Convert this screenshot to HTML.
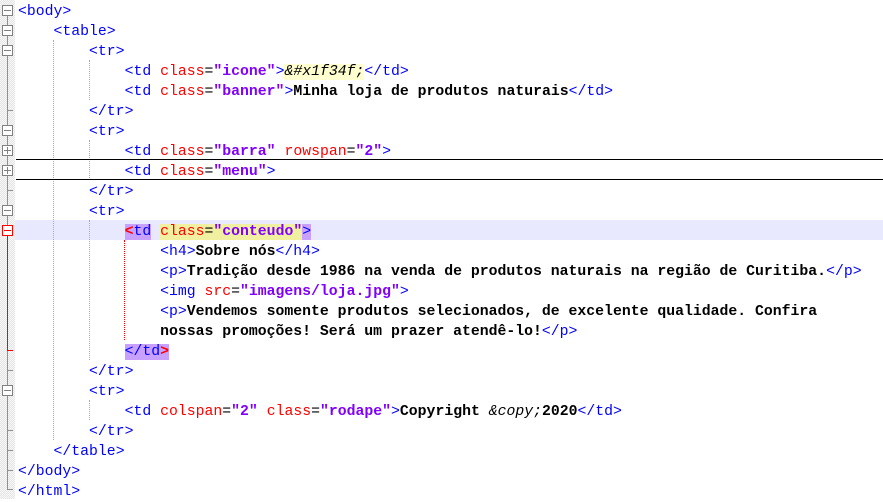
<!DOCTYPE html>
<html><head><meta charset="utf-8"><style>
body{margin:0;width:883px;height:499px;overflow:hidden;background:#fff;position:relative;font-family:"Liberation Mono",monospace;font-size:14.8px}
.m{position:absolute;left:0;top:0;width:15px;height:499px;background-color:#f0f0f0;background-image:repeating-conic-gradient(#e4e4e4 0 25%,#f8f8f8 0 50%);background-size:2px 2px}
.l{position:absolute;left:18px;height:20px;line-height:20px;margin-top:2px;white-space:pre;color:#000;font-weight:bold}
.t{color:#0000ff;font-weight:normal}.a{color:#ff0000;font-weight:normal}.v{color:#8000ff;font-weight:bold}.e{color:#000;font-weight:normal}
.box{position:absolute;left:2px;width:11px;height:11px;border:1px solid #808080;background:#fff;box-sizing:border-box;z-index:3}
.box:after{content:"";position:absolute;left:1px;top:4px;width:7px;height:1px;background:#808080}
.p:before{content:"";position:absolute;left:4px;top:1px;width:1px;height:7px;background:#808080}
.r{border-color:#ff0000}.r:after{background:#ff0000}
.vl{position:absolute;left:7px;width:1px;background:#909090;z-index:2}
.tk{position:absolute;left:7px;width:6px;height:1px;background:#909090;z-index:2}
.g{position:absolute;width:0;border-left:1px dotted #aaa}
.hl{position:absolute;height:1px;background:#000;left:16px;right:0}
.hi{background:#c8a0ff}
</style></head><body>
<div class="m"></div>
<div style="position:absolute;left:15px;top:220px;width:868px;height:20px;background:#e8e8ff"></div>
<div class="vl" style="top:10px;height:225px"></div>
<div class="vl" style="top:235px;height:116px;background:#ff0000"></div>
<div class="vl" style="top:351px;height:139px"></div>
<div class="tk" style="top:110px"></div><div class="tk" style="top:190px"></div>
<div class="tk" style="top:350px;background:#ff0000"></div>
<div class="tk" style="top:370px"></div><div class="tk" style="top:430px"></div><div class="tk" style="top:450px"></div><div class="tk" style="top:470px"></div><div class="tk" style="top:489px"></div>
<div class="box" style="top:5px"></div>
<div class="box" style="top:25px"></div>
<div class="box" style="top:45px"></div>
<div class="box" style="top:125px"></div>
<div class="box p" style="top:145px"></div>
<div class="box p" style="top:165px"></div>
<div class="box" style="top:205px"></div>
<div class="box r" style="top:225px"></div>
<div class="box" style="top:385px"></div>
<div class="g" style="left:53px;top:40px;height:400px"></div>
<div class="g" style="left:89px;top:60px;height:40px"></div>
<div class="g" style="left:89px;top:140px;height:40px"></div>
<div class="g" style="left:89px;top:220px;height:140px"></div>
<div class="g" style="left:89px;top:400px;height:20px"></div>
<div class="g" style="left:124px;top:240px;height:100px;border-color:#ff0000"></div>
<div class="hl" style="top:159px"></div><div class="hl" style="top:179px"></div>
<div class="l" style="top:0"><span class="t">&lt;body&gt;</span></div>
<div class="l" style="top:20px">    <span class="t">&lt;table&gt;</span></div>
<div class="l" style="top:40px">        <span class="t">&lt;tr&gt;</span></div>
<div class="l" style="top:60px">            <span class="t">&lt;td </span><span class="a">class</span><span class="e">=</span><span class="v">"icone"</span><span class="t">&gt;</span><span class="e" style="background:#ffffd0;font-style:italic">&amp;#x1f34f;</span><span class="t">&lt;/td&gt;</span></div>
<div class="l" style="top:80px">            <span class="t">&lt;td </span><span class="a">class</span><span class="e">=</span><span class="v">"banner"</span><span class="t">&gt;</span>Minha loja de produtos naturais<span class="t">&lt;/td&gt;</span></div>
<div class="l" style="top:100px">        <span class="t">&lt;/tr&gt;</span></div>
<div class="l" style="top:120px">        <span class="t">&lt;tr&gt;</span></div>
<div class="l" style="top:140px">            <span class="t">&lt;td </span><span class="a">class</span><span class="e">=</span><span class="v">"barra"</span> <span class="a">rowspan</span><span class="e">=</span><span class="v">"2"</span><span class="t">&gt;</span></div>
<div class="l" style="top:160px">            <span class="t">&lt;td </span><span class="a">class</span><span class="e">=</span><span class="v">"menu"</span><span class="t">&gt;</span></div>
<div class="l" style="top:180px">        <span class="t">&lt;/tr&gt;</span></div>
<div class="l" style="top:200px">        <span class="t">&lt;tr&gt;</span></div>
<div class="l" style="top:220px">            <span class="t hi"><span class="a" style="font-weight:bold">&lt;</span>td</span><span class="t"> </span><span style="background:#f0f0a0"><span class="a">class</span><span class="e">=</span><span class="v">"conteudo"</span></span><span class="t hi">&gt;</span></div>
<div class="l" style="top:240px">                <span class="t">&lt;h4&gt;</span>Sobre nós<span class="t">&lt;/h4&gt;</span></div>
<div class="l" style="top:260px">                <span class="t">&lt;p&gt;</span>Tradição desde 1986 na venda de produtos naturais na região de Curitiba.<span class="t">&lt;/p&gt;</span></div>
<div class="l" style="top:280px">                <span class="t">&lt;img </span><span class="a">src</span><span class="e">=</span><span class="v">"imagens/loja.jpg"</span><span class="t">&gt;</span></div>
<div class="l" style="top:300px">                <span class="t">&lt;p&gt;</span>Vendemos somente produtos selecionados, de excelente qualidade. Confira</div>
<div class="l" style="top:320px">                nossas promoções! Será um prazer atendê-lo!<span class="t">&lt;/p&gt;</span></div>
<div class="l" style="top:340px">            <span class="t hi">&lt;/td<span class="a" style="font-weight:bold">&gt;</span></span></div>
<div class="l" style="top:360px">        <span class="t">&lt;/tr&gt;</span></div>
<div class="l" style="top:380px">        <span class="t">&lt;tr&gt;</span></div>
<div class="l" style="top:400px">            <span class="t">&lt;td </span><span class="a">colspan</span><span class="e">=</span><span class="v">"2"</span> <span class="a">class</span><span class="e">=</span><span class="v">"rodape"</span><span class="t">&gt;</span>Copyright <span class="e" style="font-style:italic">&amp;copy;</span>2020<span class="t">&lt;/td&gt;</span></div>
<div class="l" style="top:420px">        <span class="t">&lt;/tr&gt;</span></div>
<div class="l" style="top:440px">    <span class="t">&lt;/table&gt;</span></div>
<div class="l" style="top:460px"><span class="t">&lt;/body&gt;</span></div>
<div class="l" style="top:480px"><span class="t">&lt;/html&gt;</span></div>
</body></html>
